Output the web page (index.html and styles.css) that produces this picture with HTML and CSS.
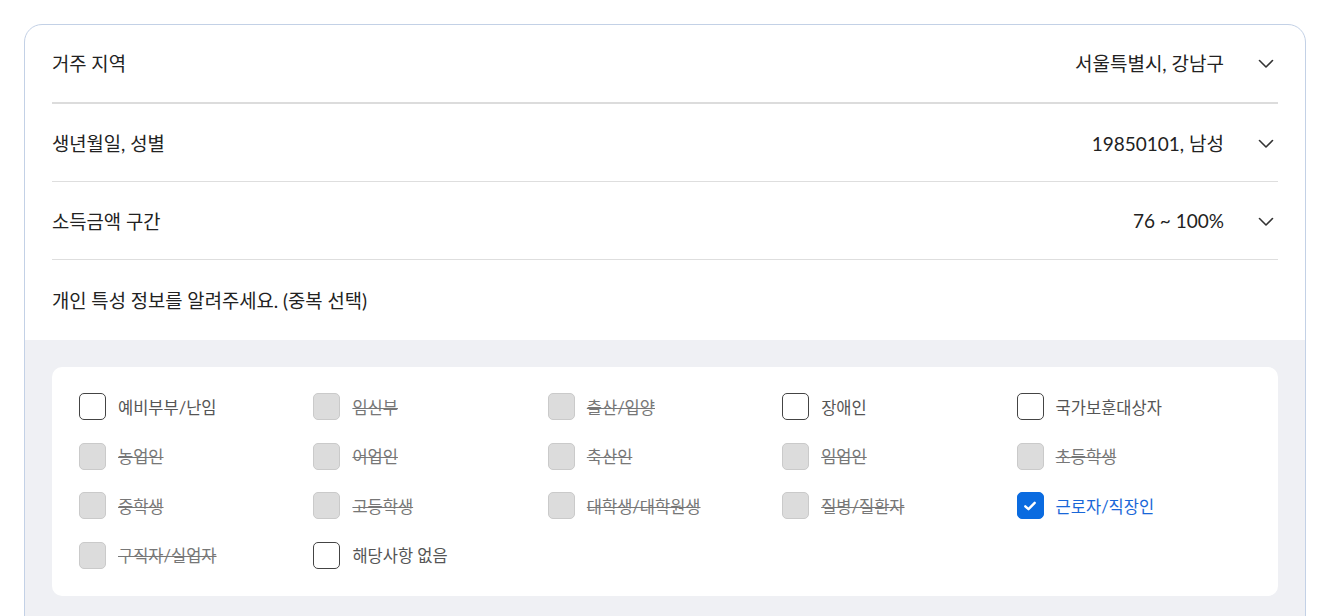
FILE: index.html
```html
<!DOCTYPE html>
<html lang="ko">
<head>
<meta charset="utf-8">
<link rel="stylesheet" href="styles.css">
</head>
<body>
<div class="card">
  <div class="rows">
    <div class="row row-first">
      <span class="label">거주 지역</span>
      <span class="value">서울특별시, 강남구</span>
      <svg class="chev" width="24" height="24" viewBox="0 0 24 24"><path d="M5.5 9.5 L12 16 L18.5 9.5" fill="none" stroke="#333" stroke-width="1.6" stroke-linecap="round" stroke-linejoin="round"/></svg>
    </div>
    <div class="row">
      <span class="label">생년월일, 성별</span>
      <span class="value">19850101, 남성</span>
      <svg class="chev" width="24" height="24" viewBox="0 0 24 24"><path d="M5.5 9.5 L12 16 L18.5 9.5" fill="none" stroke="#333" stroke-width="1.6" stroke-linecap="round" stroke-linejoin="round"/></svg>
    </div>
    <div class="row">
      <span class="label">소득금액 구간</span>
      <span class="value">76 ~ 100%</span>
      <svg class="chev" width="24" height="24" viewBox="0 0 24 24"><path d="M5.5 9.5 L12 16 L18.5 9.5" fill="none" stroke="#333" stroke-width="1.6" stroke-linecap="round" stroke-linejoin="round"/></svg>
    </div>
    <div class="row row-last">
      <span class="label">개인 특성 정보를 알려주세요. (중복 선택)</span>
    </div>
  </div>
  <div class="section">
    <div class="box">
      <div class="opt"><span class="cb"></span><span class="txt">예비부부/난임</span></div>
      <div class="opt dis"><span class="cb"></span><span class="txt">임신부</span></div>
      <div class="opt dis"><span class="cb"></span><span class="txt">출산/입양</span></div>
      <div class="opt"><span class="cb"></span><span class="txt">장애인</span></div>
      <div class="opt"><span class="cb"></span><span class="txt">국가보훈대상자</span></div>

      <div class="opt dis"><span class="cb"></span><span class="txt">농업인</span></div>
      <div class="opt dis"><span class="cb"></span><span class="txt">어업인</span></div>
      <div class="opt dis"><span class="cb"></span><span class="txt">축산인</span></div>
      <div class="opt dis"><span class="cb"></span><span class="txt">임업인</span></div>
      <div class="opt dis"><span class="cb"></span><span class="txt">초등학생</span></div>

      <div class="opt dis"><span class="cb"></span><span class="txt">중학생</span></div>
      <div class="opt dis"><span class="cb"></span><span class="txt">고등학생</span></div>
      <div class="opt dis"><span class="cb"></span><span class="txt">대학생/대학원생</span></div>
      <div class="opt dis"><span class="cb"></span><span class="txt">질병/질환자</span></div>
      <div class="opt on"><span class="cb"><svg width="16" height="16" viewBox="0 0 16 16"><path d="M3.3 8.3 L6.5 11.2 L12.7 4.8" fill="none" stroke="#fff" stroke-width="2.4" stroke-linecap="round" stroke-linejoin="round"/></svg></span><span class="txt">근로자/직장인</span></div>

      <div class="opt dis"><span class="cb"></span><span class="txt">구직자/실업자</span></div>
      <div class="opt"><span class="cb"></span><span class="txt">해당사항 없음</span></div>
    </div>
  </div>
</div>
</body>
</html>
```

FILE: styles.css
```css
* { box-sizing: border-box; }
html, body { margin: 0; background: #fff; }
body {
  padding: 24px 23px 0 24px;
  font-family: Lato, "Noto Sans CJK KR", sans-serif;
  color: #222;
}
.card {
  border: 1px solid #c3d1e6;
  border-radius: 18px;
  overflow: hidden;
  background: #fff;
}
.rows { padding: 0 27px; }
.row {
  display: flex;
  align-items: center;
  height: 78px;
  border-bottom: 1px solid #dedede;
  font-size: 18.8px;
}
.row-first { height: 79px; border-bottom: 2px solid #dcdcdc; padding-bottom: 2px; }
.row-last { border-bottom: none; height: 80px; padding-bottom: 2px; }
.label { flex: 1; color: #222; }
.value { color: #222; margin-right: 30px; font-size: 19px; }
.chev { display: block; }
.section {
  background: #eff0f4;
  padding: 27px 27px 60px 27px;
}
.box {
  background: #fff;
  border-radius: 10px;
  padding: 26px 27px 27px 27px;
  display: grid;
  grid-template-columns: repeat(5, 1fr);
  row-gap: 22.5px;
}
.opt {
  display: flex;
  align-items: center;
  gap: 12px;
  height: 27px;
  font-size: 16.5px;
}
.cb {
  width: 27px;
  height: 27px;
  border: 1.5px solid #444;
  border-radius: 5px;
  background: #fff;
  display: flex;
  align-items: center;
  justify-content: center;
  flex: none;
}
.txt { color: #555; }
.dis .cb { background: #dcdcdc; border: 1px solid #cacaca; }
.dis .txt { color: #777; text-decoration: line-through; }
.on .cb { background: #0a6be0; border: 1px solid #0a6be0; }
.on .txt { color: #1967d8; }
```
